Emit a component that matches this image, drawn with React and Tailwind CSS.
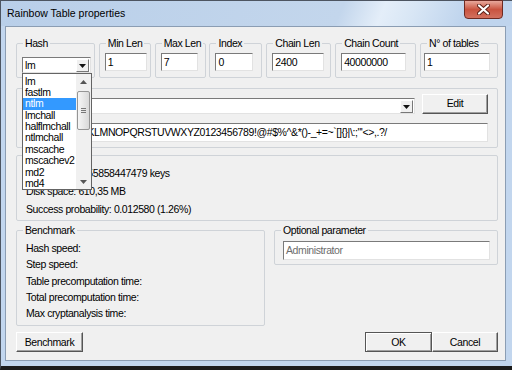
import React from 'react';

const HASHES = ['lm', 'fastlm', 'ntlm', 'lmchall', 'halflmchall', 'ntlmchall', 'mscache', 'mscachev2', 'md2', 'md4'];

const TOP_FIELDS = [
  { label: 'Min Len', w: 'w-[52px]', ml: 'ml-[5px]', iw: 'w-[42px]', value: '1' },
  { label: 'Max Len', w: 'w-[51px]', ml: 'ml-[5px]', iw: 'w-[37px]', value: '7' },
  { label: 'Index', w: 'w-[53px]', ml: 'ml-[5px]', iw: 'w-[38px]', value: '0' },
  { label: 'Chain Len', w: 'w-[65px]', ml: 'ml-[5px]', iw: 'w-[52px]', value: '2400' },
  { label: 'Chain Count', w: 'w-[81px]', ml: 'ml-[5px]', iw: 'w-[65px]', value: '40000000' },
  { label: 'N° of tables', w: 'w-[78px]', ml: 'ml-[3px]', iw: 'w-[66px]', value: '1' },
];

const CHARSET = 'ABCDEFGHIJKLMNOPQRSTUVWXYZ0123456789!@#$%^&*()-_+=~`[]{}|\\:;"\'<>,.?/';

// label is optional: the groups under the open list have theirs covered
function Group({ label, className = '', children }) {
  return (
    <fieldset className={`border border-[#cfd3d8] rounded-[2px] ${className}`}>
      {label ? (
        <legend className="ml-[6px] px-[2px] leading-[12px]">{label}</legend>
      ) : (
        <legend className="ml-[6px] w-[62px] h-[12px]" />
      )}
      {children}
    </fieldset>
  );
}

function Field({ value = '', className = '', muted = false }) {
  return (
    <div
      className={`h-[18px] bg-white border border-[#e2e2e2] border-t-[#7a7a7a] border-l-[#7a7a7a] pl-[2px] leading-[16px] whitespace-nowrap overflow-hidden ${muted ? 'text-[#6d6d6d] bg-[#fbfbfb]' : ''} ${className}`}
    >
      {value}
    </div>
  );
}

function DownTri() {
  return (
    <svg width="7" height="4" viewBox="0 0 7 4">
      <path d="M0 0H7L3.5 4Z" fill="#111" />
    </svg>
  );
}

function ComboArrow() {
  return (
    <div className="w-[13px] h-[13px] mt-[1px] mr-[1px] bg-[#f0f0f0] border border-white border-r-[#777] border-b-[#777] flex items-center justify-center">
      <DownTri />
    </div>
  );
}

function Button({ children, className = '', primary = false }) {
  return (
    <div
      className={`h-[20px] flex items-center justify-center bg-[#f0f0f0] ${
        primary
          ? 'border border-[#555] shadow-[inset_1px_1px_#fff,inset_-1px_-1px_#a0a0a0]'
          : 'border border-white border-r-[#555] border-b-[#555] shadow-[inset_-1px_-1px_#a0a0a0]'
      } ${className}`}
    >
      {children}
    </div>
  );
}

function HashList() {
  return (
    <div className="absolute left-0 top-[16px] z-10 w-[70px] h-[117px] bg-white border border-[#646464] flex">
      <div className="flex-1 pt-[1.5px]">
        {HASHES.map((h) => (
          <div
            key={h}
            className={`h-[11.4px] leading-[11.4px] pl-[2px] whitespace-nowrap ${h === 'ntlm' ? 'bg-[#3399ff] text-white' : ''}`}
          >
            {h}
          </div>
        ))}
      </div>
      <div className="w-[15px] flex flex-col bg-[#f0f0f0]">
        <div className="h-[15px] flex items-center justify-center">
          <svg width="7" height="4" viewBox="0 0 7 4">
            <path d="M0 4L3.5 0L7 4Z" fill="#555" />
          </svg>
        </div>
        <div className="flex-1">
          <div className="mt-[2px] mx-[1px] h-[39px] rounded-[2px] border border-[#959595] bg-gradient-to-r from-[#f6f6f6] to-[#d9d9d9] flex flex-col items-center justify-center gap-[1px]">
            <div className="w-[5px] h-px bg-[#777]" />
            <div className="w-[5px] h-px bg-[#777]" />
            <div className="w-[5px] h-px bg-[#777]" />
          </div>
        </div>
        <div className="h-[15px] flex items-center justify-center">
          <svg width="7" height="4" viewBox="0 0 7 4">
            <path d="M0 0H7L3.5 4Z" fill="#555" />
          </svg>
        </div>
      </div>
    </div>
  );
}

export default function App() {
  return (
    <div className="w-[512px] h-[370px] flex flex-col bg-[#c2d6ee] border-t border-l border-[#4d5561] border-b-[4px] border-b-[#1c1c1c]">
      {/* Title bar */}
      <div className="h-[25px] flex items-start bg-[linear-gradient(112deg,#b9cfe9_0%,#c3d6ec_66%,#e4eef9_74%,#d8e6f5_80%,#bfd4ed_90%)]">
        <span className="pl-[6px] pt-[5px] text-[10.5px] leading-[14px] text-black font-['Liberation_Sans',Arial,sans-serif]">
          Rainbow Table properties
        </span>
        <div className="ml-auto mr-[9px] w-[39px] h-[19px] -mt-px rounded-b-[4px] border border-[#6e2a22] bg-gradient-to-b from-[#e7a89c] via-[#c9533f] to-[#d2705f] flex items-center justify-center">
          <svg width="13" height="11" viewBox="0 0 13 11">
            <path d="M2 1.5L11 9.5M11 1.5L2 9.5" stroke="#5a1d14" strokeWidth="4" strokeLinecap="round" />
            <path d="M2 1.5L11 9.5M11 1.5L2 9.5" stroke="#fff" strokeWidth="2.2" strokeLinecap="round" />
          </svg>
        </div>
      </div>

      {/* Window body */}
      <div className="flex-1 flex pl-[4px] pr-[6px] pb-[5px]">
        <div className="flex-1 flex flex-col bg-[#f0f0f0] border border-[#8b9db3] pt-[10px] pl-[10px] pr-[7px] text-[10.5px] tracking-[-0.4px] text-black font-['Liberation_Sans',Arial,sans-serif]">
          {/* Top row */}
          <div className="flex justify-between">
            <Group label="Hash" className="w-[79px] pb-[4px]">
              <div className="relative ml-[5px] mt-[8px] w-[69px]">
                <div className="h-[16px] bg-white border border-[#e2e2e2] border-t-[#7a7a7a] border-l-[#7a7a7a] flex justify-between">
                  <span className="pl-[2px] leading-[14px]">lm</span>
                  <ComboArrow />
                </div>
                <HashList />
              </div>
            </Group>
            {TOP_FIELDS.map((f) => (
              <Group key={f.label} label={f.label} className={`${f.w} pb-[6px]`}>
                <Field value={f.value} className={`${f.ml} ${f.iw} mt-[4px]`} />
              </Group>
            ))}
          </div>

          {/* Charset */}
          <Group className="mt-[4px] pb-[5px]">
            <div className="flex items-end ml-[5px]">
              <div className="w-[393px] h-[16px] bg-white border border-[#e2e2e2] border-t-[#7a7a7a] border-l-[#7a7a7a] flex justify-end">
                <ComboArrow />
              </div>
              <Button className="ml-[7px] w-[66px]">Edit</Button>
            </div>
            <Field value={CHARSET} className="ml-[5px] mt-[9px] w-[466px] h-[19px]" />
          </Group>

          {/* Info */}
          <Group className="mt-[1px] pb-[2px]">
            <div className="pl-[9px] mt-[3px] leading-[18px]">
              <div>Key space: 7555858447479 keys</div>
              <div>Disk space: 610,35 MB</div>
              <div>Success probability: 0.012580 (1.26%)</div>
            </div>
          </Group>

          {/* Benchmark + optional parameter */}
          <div className="flex mt-[3px] items-start">
            <Group label="Benchmark" className="w-[249px] pb-[4px]">
              <div className="pl-[9px] mt-[4px] leading-[16.3px]">
                <div>Hash speed:</div>
                <div>Step speed:</div>
                <div>Table precomputation time:</div>
                <div>Total precomputation time:</div>
                <div>Max cryptanalysis time:</div>
              </div>
            </Group>
            <Group label="Optional parameter" className="ml-auto w-[224px] pb-[4px]">
              <Field value="Administrator" muted className="ml-[8px] mt-[5px] w-[207px] h-[19px]" />
            </Group>
          </div>

          {/* Buttons */}
          <div className="flex mt-[6px]">
            <Button className="w-[67px]">Benchmark</Button>
            <Button primary className="ml-auto w-[67px]">OK</Button>
            <Button className="w-[66px]">Cancel</Button>
          </div>
        </div>
      </div>
    </div>
  );
}
